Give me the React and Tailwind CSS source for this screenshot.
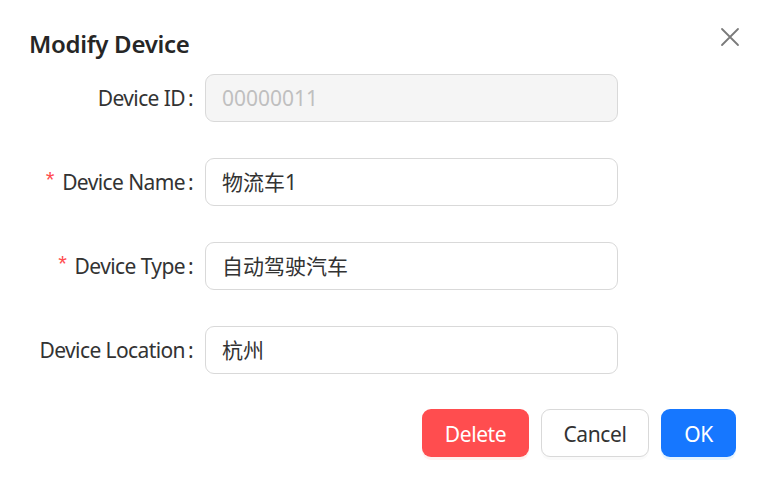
import React from "react";

const font = { fontFamily: '"Noto Sans", "Noto Sans CJK SC", sans-serif' };

function Row({ label, required, value, disabled }) {
  return (
    <div className="flex items-center h-[48px]">
      <div className="w-[205px] flex justify-end items-center pr-[12px] pt-[2px] text-[21px] text-[#333333] tracking-[-0.6px]">
        {required && (
          <span className="text-[#ff4d4f] mr-[6px] text-[22px] leading-none" style={{ fontFamily: '"Liberation Mono", monospace' }}>*</span>
        )}
        <span>{label}</span>
        <span className="ml-[3px]">:</span>
      </div>
      <div
        className={`w-[413px] h-[48px] rounded-[9px] border border-[#d9d9d9] flex items-center px-[16px] pt-[2px] text-[21px] ${
          disabled ? "bg-[#f5f5f5] text-[#bfbfbf]" : "bg-white text-[#333333]"
        }`}
      >
        {value}
      </div>
    </div>
  );
}

export default function App() {
  return (
    <div className="w-[768px] h-[478px] bg-white relative" style={font}>
      <div className="pt-[30px] px-[29px] flex items-center h-[66px]">
        <div className="text-[24px] font-semibold text-[#262626] leading-[30px] -mt-[8px] tracking-[-0.3px]">Modify Device</div>
      </div>
      <button className="absolute left-[720px] top-[27px] w-[20px] h-[20px] flex items-center justify-center">
        <svg width="20" height="20" viewBox="0 0 20 20" fill="none" stroke="#7a7a7a" strokeWidth="1.8" strokeLinecap="round">
          <path d="M2 2 L18 18 M18 2 L2 18" />
        </svg>
      </button>
      <div className="flex flex-col gap-[36px] mt-[8px]">
        <Row label="Device ID" value="00000011" disabled />
        <Row label="Device Name" value="物流车1" required />
        <Row label="Device Type" value="自动驾驶汽车" required />
        <Row label="Device Location" value="杭州" />
      </div>
      <div className="flex justify-end gap-[12px] pr-[32px] mt-[35px] text-[21px] tracking-[-0.4px]">
        <button className="w-[107px] h-[48px] pt-[3px] rounded-[9px] bg-[#ff4d4f] text-white shadow-[0_3px_0_rgba(255,38,5,0.06)]">Delete</button>
        <button className="w-[108px] h-[48px] pt-[3px] rounded-[9px] bg-white border border-[#d9d9d9] text-[#333333] shadow-[0_3px_0_rgba(0,0,0,0.02)]">Cancel</button>
        <button className="w-[75px] h-[48px] pt-[3px] rounded-[9px] bg-[#1677ff] text-white shadow-[0_3px_0_rgba(5,145,255,0.1)]">OK</button>
      </div>
    </div>
  );
}
